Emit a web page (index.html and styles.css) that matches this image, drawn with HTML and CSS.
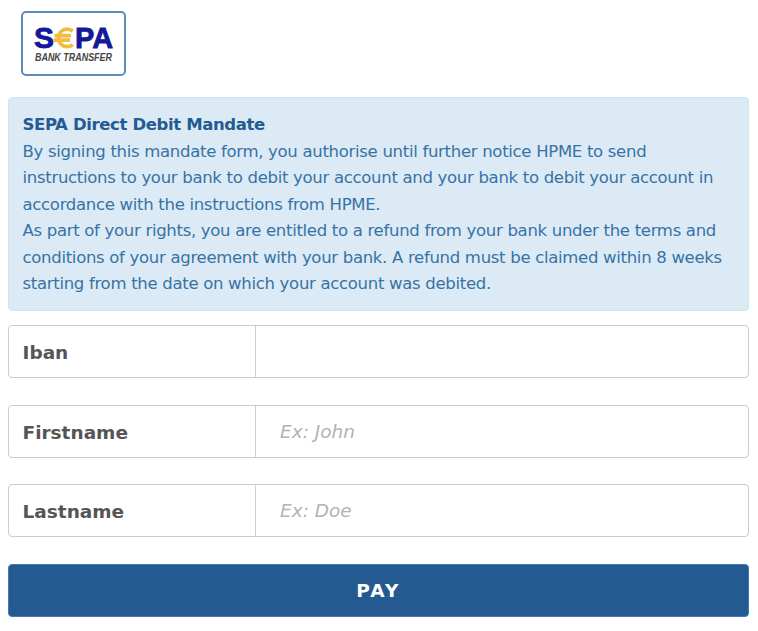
FILE: index.html
```html
<!DOCTYPE html>
<html lang="en">
<head>
    <meta charset="UTF-8">
    <meta name="viewport" content="width=device-width, initial-scale=1.0">
    <title>SEPA Payment</title>
    <link rel="stylesheet" href="styles.css">
</head>
<body>

    <form class="payment-form">
        <!-- Payment method -->
        <div class="method">
            <svg class="logo" width="87" height="46" viewBox="-4 -5 87 46" role="img" aria-label="SEPA Bank Transfer">
                <text class="logo-name" x="0" y="22" textLength="20" lengthAdjust="spacingAndGlyphs">S</text>
                <text class="logo-name" x="41" y="22" textLength="38" lengthAdjust="spacingAndGlyphs">PA</text>
                <path class="logo-euro" d="M38.8 5.2 A8.7 8.8 0 1 0 38.8 18.6 M20.5 9.6 H37 M19.5 14.2 H36"/>
                <text class="logo-sub" x="1" y="35" textLength="77" lengthAdjust="spacingAndGlyphs">BANK TRANSFER</text>
            </svg>
        </div>

        <!-- Mandate -->
        <div class="mandate">
            <strong>SEPA Direct Debit Mandate</strong>
            <p>By signing this mandate form, you authorise until further notice HPME to send instructions to your bank to debit your account and your bank to debit your account in accordance with the instructions from HPME.</p>
            <p>As part of your rights, you are entitled to a refund from your bank under the terms and conditions of your agreement with your bank. A refund must be claimed within 8 weeks starting from the date on which your account was debited.</p>
        </div>

        <!-- Account holder -->
        <div class="field">
            <label for="iban">Iban</label>
            <input type="text" id="iban">
        </div>
        <div class="field">
            <label for="firstname">Firstname</label>
            <input type="text" id="firstname" placeholder="Ex: John">
        </div>
        <div class="field">
            <label for="lastname">Lastname</label>
            <input type="text" id="lastname" placeholder="Ex: Doe">
        </div>

        <button type="button" class="pay-btn">PAY</button>
    </form>

</body>
</html>
```
FILE: styles.css
```css
* {
    box-sizing: border-box;
}

body {
    margin: 0;
    background-color: #fff;
    font-family: "DejaVu Sans", sans-serif;
}

.payment-form {
    padding: 11px 9px 0 8px;
}

/* Payment method */
.method {
    display: flex;
    justify-content: center;
    width: 105px;
    height: 65px;
    margin: 0 0 21px 13px;
    padding-top: 8px;
    border: 2px solid #5b8db8;
    border-radius: 5px;
}

.logo {
    flex: none;
}

.logo-name {
    font: bold 29px "Liberation Sans", sans-serif;
    fill: #13199a;
    stroke: #13199a;
    stroke-width: 0.8;
}

.logo-euro {
    fill: none;
    stroke: #f0bc42;
    stroke-width: 3.7;
}

.logo-sub {
    font: italic bold 10px "Liberation Sans", sans-serif;
    fill: #444;
}

/* Mandate */
.mandate {
    height: 214px;
    margin-bottom: 14px;
    padding: 14px 14px 12px 13.5px;
    border: 1px solid #cbe7f0;
    border-radius: 4px;
    background-color: #dceaf5;
    color: #3673a5;
    font-size: 16.5px;
    letter-spacing: -0.3px;
    line-height: 26.5px;
}

.mandate strong {
    display: block;
    color: #235b92;
    letter-spacing: -0.37px;
}

.mandate p {
    margin: 0;
}

/* Fields */
.field {
    display: flex;
    height: 53px;
    margin-bottom: 26.6px;
    border: 1px solid #cbcbcb;
    border-radius: 4px;
}

.field label {
    width: 247px;
    padding: 1px 13.5px 0;
    border-right: 1px solid #d0d0d0;
    color: #555;
    font-size: 18.5px;
    font-weight: bold;
    line-height: 51px;
}

.field input {
    flex: 1;
    min-width: 0;
    padding: 0 24px;
    border: none;
    outline: none;
    background: none;
    color: #555;
    font-family: inherit;
    font-size: 18.5px;
}

.field input::placeholder {
    color: #b3b3b3;
    font-style: italic;
    opacity: 1;
}

.pay-btn {
    display: block;
    width: 100%;
    height: 53px;
    padding: 0;
    border: 1px solid #3c7bb3;
    border-radius: 4px;
    background-color: #245a90;
    color: #fff;
    font-family: inherit;
    font-size: 18.5px;
    font-weight: bold;
    letter-spacing: 2.2px;
    cursor: pointer;
}
```
